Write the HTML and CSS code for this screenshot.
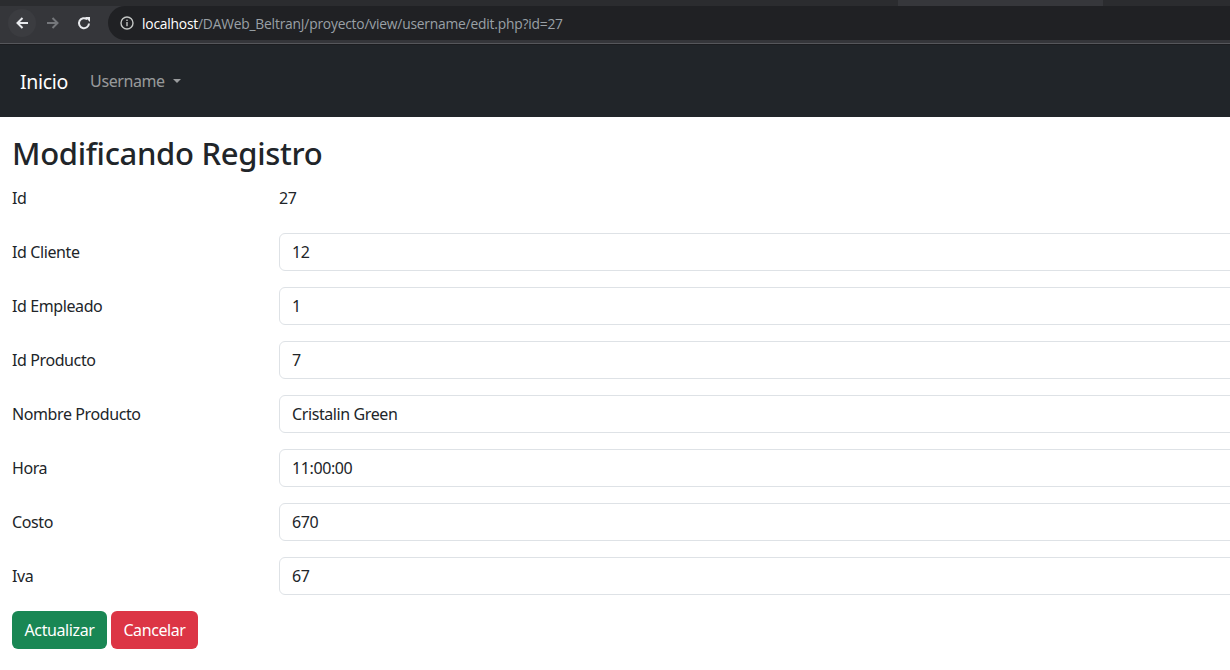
FILE: index.html
```html
<!DOCTYPE html>
<html lang="es">
<head>
<meta charset="utf-8">
<title>Modificando Registro</title>
<link rel="stylesheet" href="styles.css">
</head>
<body>
<div class="chrome">
  <div class="tabstrip"><div class="tab-gap"></div><div class="tab-light"></div><div class="tab-rest"></div></div>
  <div class="toolbar">
    <div class="navbtn hover">
      <svg width="16" height="16" viewBox="0 0 16 16"><path d="M14 8H3.5M8.5 3L3.5 8l5 5" fill="none" stroke="#e8eaed" stroke-width="2"/></svg>
    </div>
    <div class="navbtn">
      <svg width="16" height="16" viewBox="0 0 16 16"><path d="M2 8h10.5M7.5 3l5 5-5 5" fill="none" stroke="#75777b" stroke-width="2"/></svg>
    </div>
    <div class="navbtn">
      <svg width="16" height="16" viewBox="0 0 16 16"><path d="M13 8.5A5 5 0 1 1 11.2 4.3" fill="none" stroke="#e8eaed" stroke-width="2"/><path d="M9 2h5v5z" fill="#e8eaed"/></svg>
    </div>
    <div class="omnibox">
      <svg class="info" width="14" height="14" viewBox="0 0 14 14"><circle cx="7" cy="7" r="6" fill="none" stroke="#c4c7c5" stroke-width="1.4"/><rect x="6.3" y="6" width="1.4" height="4.2" fill="#c4c7c5"/><rect x="6.3" y="3.6" width="1.4" height="1.4" fill="#c4c7c5"/></svg>
      <span class="host">localhost</span><span class="path">/DAWeb_BeltranJ/proyecto/view/username/edit.php?id=27</span>
    </div>
  </div>
</div>

<nav class="navbar">
  <a class="brand">Inicio</a>
  <a class="navlink">Username <span class="caret"></span></a>
</nav>

<main class="content">
  <h1 class="title">Modificando Registro</h1>
  <form class="form">
    <div class="row"><label class="label">Id</label><div class="plain">27</div></div>
    <div class="row"><label class="label">Id Cliente</label><input class="input" value="12"></div>
    <div class="row"><label class="label">Id Empleado</label><input class="input" value="1"></div>
    <div class="row"><label class="label">Id Producto</label><input class="input" value="7"></div>
    <div class="row"><label class="label">Nombre Producto</label><input class="input" value="Cristalin Green"></div>
    <div class="row"><label class="label">Hora</label><input class="input" value="11:00:00"></div>
    <div class="row"><label class="label">Costo</label><input class="input" value="670"></div>
    <div class="row"><label class="label">Iva</label><input class="input" value="67"></div>
    <div class="actions">
      <button type="button" class="btn btn-success">Actualizar</button>
      <button type="button" class="btn btn-danger">Cancelar</button>
    </div>
  </form>
</main>
</body>
</html>
```

FILE: styles.css
```css
* { box-sizing: border-box; }
html, body { margin: 0; padding: 0; overflow: hidden; }
body {
  width: 1230px;
  height: 670px;
  background: #fff;
  font-family: "Noto Sans", "Open Sans", sans-serif;
  color: #212529;
}

/* browser chrome */
.chrome { background: #35363a; }
.tabstrip { height: 6px; display: flex; background: #202124; }
.tab-gap { width: 898px; background: #2b2c2f; }
.tab-light { width: 205px; background: #36373b; }
.tab-rest { flex: 1; background: #2b2c2f; }
.toolbar {
  height: 38px;
  display: flex;
  align-items: flex-start;
  padding-left: 8px;
  border-bottom: 1px solid #56575b;
}
.navbtn {
  width: 28px;
  height: 28px;
  margin-top: 3px;
  margin-right: 3px;
  border-radius: 50%;
  display: flex;
  align-items: center;
  justify-content: center;
}
.navbtn.hover { background: #3b3c40; }
.omnibox {
  margin-left: 7px;
  flex: 1;
  height: 34px;
  background: #202124;
  border-radius: 17px 0 0 17px;
  display: flex;
  align-items: center;
  padding-left: 12px;
  font-family: "Open Sans", sans-serif;
  font-size: 13.8px;
  letter-spacing: -0.2px;
}
.info { margin-right: 8px; }
.host { color: #ffffff; }
.path { color: #9aa0a6; }

/* navbar */
.navbar {
  height: 73px;
  background: #212529;
  display: flex;
  align-items: center;
  padding: 0 20px;
  border-top: 1px solid #1c1d20;
}
.brand {
  color: #fff;
  font-size: 19.5px;
  letter-spacing: -0.3px;
  margin-right: 22px;
}
.navlink {
  color: rgba(255,255,255,0.55);
  font-size: 16px;
  letter-spacing: -0.4px;
  display: flex;
  align-items: center;
}
.caret {
  display: inline-block;
  margin-left: 8px;
  border-top: 4.5px solid rgba(255,255,255,0.55);
  border-left: 4.5px solid transparent;
  border-right: 4.5px solid transparent;
}

/* content */
.content { padding: 0 12px; }
.title {
  margin: 18px 0 7px;
  font-size: 31px;
  font-weight: 500;
  line-height: 1.2;
  letter-spacing: -0.3px;
}
.form { width: 1260px; }
.row {
  display: grid;
  grid-template-columns: 267px 1fr;
  align-items: center;
  height: 38px;
  margin-bottom: 16px;
  font-size: 16px;
  letter-spacing: -0.4px;
}
.label { color: #212529; }
.plain { padding-left: 0; }
.input {
  height: 38px;
  border: 1px solid #dee2e6;
  border-radius: 6px;
  padding: 0 12px;
  font-family: inherit;
  font-size: 16px;
  letter-spacing: -0.4px;
  color: #212529;
  background: #fff;
  outline: none;
}
.actions { display: flex; gap: 4px; margin-top: 0; }
.btn {
  height: 38px;
  border: none;
  border-radius: 6px;
  padding: 0 12px;
  color: #fff;
  font-family: inherit;
  font-size: 16px;
  letter-spacing: -0.4px;
}
.btn-success { background: #198754; width: 95px; }
.btn-danger { background: #dc3545; width: 87px; }
```
